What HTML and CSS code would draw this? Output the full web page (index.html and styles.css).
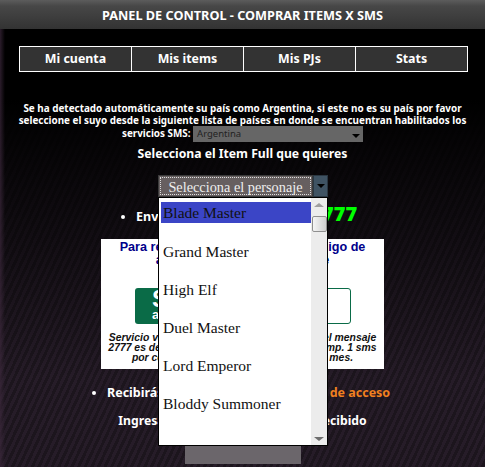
FILE: index.html
```html
<!DOCTYPE html>
<html lang="es">
<head>
  <meta charset="UTF-8">
  <title>Panel de control</title>
  <link rel="stylesheet" href="styles.css">
</head>
<body>
  <h1 class="panel-title">PANEL DE CONTROL - COMPRAR ITEMS X SMS</h1>

  <nav class="tabs">
    <a href="#">Mi cuenta</a>
    <a href="#">Mis items</a>
    <a href="#">Mis PJs</a>
    <a href="#">Stats</a>
  </nav>

  <p class="country">
    Se ha detectado automáticamente su país como Argentina, si este no es su país por favor
    seleccione el suyo desde la siguiente lista de países en donde se encuentran habilitados los
    servicios SMS:
    <span class="country-select">Argentina<i class="arrow"></i></span>
  </p>

  <h2 class="pick-title">Selecciona el Item Full que quieres</h2>

  <div class="combo">
    <div class="combo-box">
      <span class="combo-label"><span>Selecciona el personaje</span></span>
      <span class="combo-btn"><i class="arrow"></i></span>
    </div>
    <div class="combo-list">
      <ul>
        <li class="active">Blade Master</li>
        <li>Grand Master</li>
        <li>High Elf</li>
        <li>Duel Master</li>
        <li>Lord Emperor</li>
        <li>Bloddy Summoner</li>
      </ul>
      <div class="scroll">
        <svg class="scroll-up" width="16" height="14" viewBox="0 0 16 14"><path d="M3 9 8 5l5 4z" fill="#a0a0a0"/></svg>
        <div class="thumb"></div>
        <svg class="scroll-down" width="16" height="14" viewBox="0 0 16 14"><path d="M3 6l5 4 5-4z" fill="#6e6e6e"/></svg>
      </div>
    </div>
  </div>

  <ul class="steps send">
    <li>Envía el mensaje de ITEM al <b class="number">2777</b></li>
  </ul>

  <div class="promo">
    <p class="promo-title">Para realizar la compra pide tu código de<br>acceso envíanos el siguiente</p>
    <div class="promo-row">
      <div class="promo-green"><b>S</b><span>a</span></div>
      <div class="promo-white"></div>
    </div>
    <p class="promo-legal">Servicio válido para todo el país. El costo del mensaje<br>2777 es de $ 2 pesos finales por mensaje + Imp. 1 sms<br>por código, máximo cinco por usuario / mes.</p>
  </div>

  <ul class="steps receive">
    <li>Recibirás un mensaje con tu código <span class="orange">de acceso</span></li>
  </ul>

  <p class="enter">Ingresa aquí el código de acceso recibido</p>

  <div class="code-input"></div>
</body>
</html>
```

FILE: styles.css
```css
html, body {
  margin: 0;
  height: 467px;
  overflow: hidden;
}

body {
  width: 485px;
  font-family: "Noto Sans", sans-serif;
  font-weight: bold;
  color: #fff;
  background:
    linear-gradient(to right, rgba(60,40,60,.7) 0, rgba(60,40,60,0) 5px),
    linear-gradient(to bottom, #000 0, #000 100px, rgba(0,0,0,.55) 230px, rgba(0,0,0,0) 380px),
    repeating-linear-gradient(115deg, #261c28 0, #261c28 3px, #1c151d 3px, #1c151d 6px);
}

.panel-title {
  margin: 0;
  height: 29px;
  line-height: 31px;
  font-size: 12.7px;
  text-align: center;
  background: linear-gradient(#5c5c5c 0, #474747 6px, #333 29px);
}

.tabs {
  display: grid;
  grid-template-columns: repeat(4, 112px);
  width: 448px;
  margin: 17px 0 0 19px;
  border-right: 1px solid #fff;
}

.tabs a {
  height: 24px;
  line-height: 24px;
  border: 1px solid #fff;
  border-right: 0;
  background: #333;
  color: #fff;
  font-size: 12.4px;
  text-align: center;
  text-decoration: none;
}

.country {
  margin: 30px 0 0;
  font-size: 9.9px;
  line-height: 12px;
  text-align: center;
}

.country-select {
  display: inline-block;
  position: relative;
  width: 170px;
  height: 16px;
  line-height: 16px;
  padding-left: 4px;
  box-sizing: border-box;
  vertical-align: middle;
  text-align: left;
  font-size: 9.5px;
  font-weight: normal;
  color: #222;
  background: #666;
}

.country-select .arrow {
  position: absolute;
  right: 3px;
  top: 8px;
}

.arrow {
  display: block;
  width: 0;
  height: 0;
  border: 4px solid transparent;
  border-top: 4px solid #000;
  border-bottom: 0;
}

.pick-title {
  margin: 4px 0 0;
  font-size: 12.2px;
  line-height: 16px;
  text-align: center;
}

.combo {
  position: relative;
  width: 170px;
  margin: 13px 0 0 158px;
}

.combo-box {
  display: flex;
  height: 22px;
}

.combo-label {
  flex: 1;
  padding: 1px;
  background: #665f60;
  border: 1px solid #3a3a3a;
  box-sizing: border-box;
}

.combo-label span {
  display: block;
  height: 100%;
  border: 1px dotted #ddd;
  box-sizing: border-box;
  font: 14.3px/19px "Liberation Serif", serif;
  color: #eee;
  text-align: center;
}

.combo-btn {
  display: flex;
  align-items: center;
  justify-content: center;
  width: 15px;
  background: #3f5363;
  border: 1px solid #2a3742;
  box-sizing: border-box;
}

.combo-list {
  position: absolute;
  top: 22px;
  left: 0;
  display: flex;
  width: 170px;
  height: 249px;
  box-sizing: border-box;
  background: #fff;
  border: 1px solid #000;
  z-index: 2;
}

.combo-list ul {
  flex: 1;
  margin: 0;
  padding: 4px 0 0 2px;
  list-style: none;
}

.combo-list li {
  height: 21px;
  margin-bottom: 17px;
  padding-left: 2px;
  font: 15.5px/24px "Liberation Serif", serif;
  color: #111;
}

.combo-list li.active {
  background: #3b45c6;
  line-height: 22px;
  color: #111;
}

.scroll {
  display: flex;
  flex-direction: column;
  align-items: center;
  width: 16px;
  background: #ececec;
}

.scroll-up {
  margin-bottom: 4px;
}

.scroll-down {
  margin-top: auto;
}

.thumb {
  width: 15px;
  height: 16px;
  border: 1px solid #8f8f8f;
  border-radius: 2px;
  box-sizing: border-box;
  background: linear-gradient(to right, #f5f5f5, #cfcfcf);
}

.steps {
  margin: 0;
  font-size: 12.5px;
  line-height: 16px;
}

.send {
  margin-top: 9px;
  padding-left: 136px;
}

.receive {
  margin-top: 16px;
  padding-left: 107px;
}

.number {
  color: #0f0;
  font-size: 20px;
}

.promo {
  width: 283px;
  height: 130px;
  margin: 14px 0 0 101px;
  padding-top: 2px;
  box-sizing: border-box;
  background: #fff;
  text-align: center;
}

.promo-title {
  margin: 0;
  font: bold 12.6px/13px "Liberation Sans", sans-serif;
  color: #00008b;
}

.promo-row {
  display: flex;
  height: 36px;
  margin: 21px 0 0 34px;
}

.promo-green {
  width: 60px;
  padding-left: 17px;
  box-sizing: border-box;
  border-radius: 3px;
  background: #0a6b47;
  color: #fff;
  font: bold 24px/22px "Liberation Sans", sans-serif;
  text-align: left;
}

.promo-green span {
  display: block;
  font-size: 13px;
  line-height: 10px;
}

.promo-white {
  width: 156px;
  box-sizing: border-box;
  border: 1px solid #0a6b47;
  border-radius: 3px;
}

.promo-legal {
  margin: 9px 0 0;
  font: italic bold 10.4px/10px "Liberation Sans", sans-serif;
  color: #111;
}

.orange {
  color: #f08020;
}

.enter {
  margin: 12px 0 0;
  font-size: 12.2px;
  line-height: 16px;
  text-align: center;
}

.code-input {
  width: 116px;
  height: 18px;
  margin: 17px 0 0 185px;
  background: #6b666b;
}
```
